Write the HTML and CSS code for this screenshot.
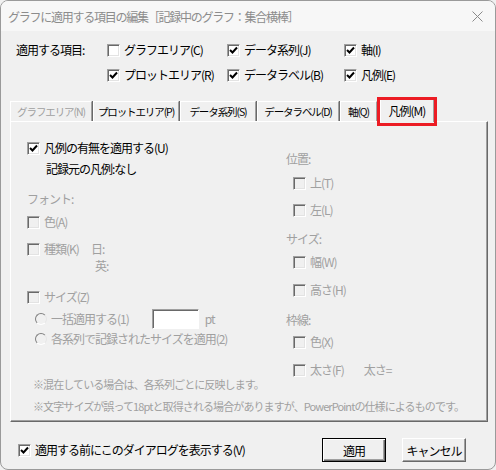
FILE: index.html
```html
<!DOCTYPE html>
<html lang="ja">
<head>
<meta charset="utf-8">
<link rel="stylesheet" href="styles.css">
</head>
<body>
<div class="window">
  <div class="titlebar">
    <span class="title">グラフに適用する項目の編集［記録中のグラフ：集合横棒］</span>
    <svg class="close" width="11" height="11" viewBox="0 0 11 11"><path d="M0.5 0.5L10.5 10.5M10.5 0.5L0.5 10.5" stroke="#8a8a8a" stroke-width="1" fill="none"/></svg>
  </div>
  <div class="body">
    <div class="targets">
      <div class="tlabel">適用する項目:</div>
      <div class="titems">
        <label class="cb"><span class="box"></span>グラフエリア(C)</label>
        <label class="cb"><span class="box on"><svg width="11" height="11" viewBox="0 0 11 11"><path d="M2 5L4.5 7.5L9 2.5" stroke="#000" stroke-width="2" fill="none"/></svg></span>データ系列(J)</label>
        <label class="cb"><span class="box on"><svg width="11" height="11" viewBox="0 0 11 11"><path d="M2 5L4.5 7.5L9 2.5" stroke="#000" stroke-width="2" fill="none"/></svg></span>軸(I)</label>
        <label class="cb"><span class="box on"><svg width="11" height="11" viewBox="0 0 11 11"><path d="M2 5L4.5 7.5L9 2.5" stroke="#000" stroke-width="2" fill="none"/></svg></span>プロットエリア(R)</label>
        <label class="cb"><span class="box on"><svg width="11" height="11" viewBox="0 0 11 11"><path d="M2 5L4.5 7.5L9 2.5" stroke="#000" stroke-width="2" fill="none"/></svg></span>データラベル(B)</label>
        <label class="cb"><span class="box on"><svg width="11" height="11" viewBox="0 0 11 11"><path d="M2 5L4.5 7.5L9 2.5" stroke="#000" stroke-width="2" fill="none"/></svg></span>凡例(E)</label>
      </div>
    </div>

    <div class="tabs">
      <div class="tab disabled t1">グラフエリア(N)</div>
      <div class="tab t2">プロットエリア(P)</div>
      <div class="tab t3">データ系列(S)</div>
      <div class="tab t4">データラベル(D)</div>
      <div class="tab t5">軸(Q)</div>
      <div class="tab active t6">凡例(M)<span class="highlight"></span></div>
    </div>

    <div class="panel">
      <div class="cols">
        <div class="colL">
          <label class="cb row r-u"><span class="box on"><svg width="11" height="11" viewBox="0 0 11 11"><path d="M2 5L4.5 7.5L9 2.5" stroke="#000" stroke-width="2" fill="none"/></svg></span>凡例の有無を適用する(U)</label>
          <div class="row r-src">記録元の凡例:なし</div>
          <div class="row gray r-font">フォント:</div>
          <label class="cb row gray r-color"><span class="box dis"></span>色(A)</label>
          <div class="row gray r-kind"><label class="cb"><span class="box dis"></span>種類(K)</label><span class="lang">日:</span></div>
          <div class="row gray r-en"><span class="lang">英:</span></div>
          <label class="cb row gray r-size"><span class="box dis"></span>サイズ(Z)</label>
          <div class="row gray r-rad1"><span class="radio"></span>一括適用する(1)<span class="input"></span><span class="pt">pt</span></div>
          <div class="row gray r-rad2"><span class="radio"></span>各系列で記録されたサイズを適用(2)</div>
        </div>
        <div class="colR">
          <div class="row gray r-pos">位置:</div>
          <label class="cb row gray sub r-top"><span class="box dis"></span>上(T)</label>
          <label class="cb row gray sub r-left"><span class="box dis"></span>左(L)</label>
          <div class="row gray r-sz">サイズ:</div>
          <label class="cb row gray sub r-w"><span class="box dis"></span>幅(W)</label>
          <label class="cb row gray sub r-h"><span class="box dis"></span>高さ(H)</label>
          <div class="row gray r-border">枠線:</div>
          <label class="cb row gray sub r-bc"><span class="box dis"></span>色(X)</label>
          <div class="row gray sub r-bw"><label class="cb"><span class="box dis"></span>太さ(F)</label><span class="weq">太さ=</span></div>
        </div>
      </div>
      <div class="notes gray">
        <div class="note">※混在している場合は、各系列ごとに反映します。</div>
        <div class="note n2">※文字サイズが誤って18ptと取得される場合がありますが、PowerPointの仕様によるものです。</div>
      </div>
    </div>

    <div class="footer">
      <label class="cb"><span class="box on"><svg width="11" height="11" viewBox="0 0 11 11"><path d="M2 5L4.5 7.5L9 2.5" stroke="#000" stroke-width="2" fill="none"/></svg></span>適用する前にこのダイアログを表示する(V)</label>
      <div class="buttons">
        <button class="btn default">適用</button>
        <button class="btn">キャンセル</button>
      </div>
    </div>
  </div>
</div>
</body>
</html>
```

FILE: styles.css
```css
* { box-sizing: border-box; }
html, body { margin: 0; padding: 0; background: #f0f0f0; }
body {
  font-family: "Noto Sans CJK JP", "Noto Sans", sans-serif;
  font-size: 12px;
  letter-spacing: -1px;
  color: #000;
}
.window {
  width: 496px;
  height: 470px;
  border: 1px solid #9a9a9a;
  border-radius: 8px;
  background: #f0f0f0;
  overflow: hidden;
  position: relative;
}
.titlebar {
  height: 30px;
  background: #f7f7f7;
  display: flex;
  align-items: center;
  justify-content: space-between;
  padding: 0 12px 0 7px;
}
.title {
  color: #8c8c8c;
  font-size: 12px;
  letter-spacing: -1.25px;
}
.close { display: block; }
.body { position: relative; }

.targets {
  display: flex;
  align-items: flex-start;
  padding: 11px 0 0 15px;
  height: 68px;
}
.tlabel { width: 91px; line-height: 16px; }
.titems {
  display: grid;
  grid-template-columns: 120px 117px 100px;
  grid-auto-rows: 16px;
  align-content: start;
  row-gap: 9px;
}
.cb {
  display: flex;
  align-items: center;
  gap: 4px;
  line-height: 16px;
  height: 16px;
  white-space: nowrap;
}
.box {
  width: 13px;
  height: 13px;
  flex: none;
  background: #fff;
  border: 1px solid;
  border-color: #a0a0a0 #ffffff #ffffff #a0a0a0;
  box-shadow: inset 1px 1px 0 #696969, inset -1px -1px 0 #e3e3e3;
  display: flex;
  align-items: center;
  justify-content: center;
}
.box svg { display: block; }
.box.dis { background: #f0f0f0; }

.tabs {
  display: flex;
  align-items: flex-end;
  height: 22px;
  padding-left: 9px;
  position: relative;
  z-index: 1;
  font-size: 10.5px;
  letter-spacing: -1.1px;
}
.tab {
  flex: none;
  height: 20px;
  line-height: 19px;
  padding: 0;
  text-align: center;
  border-top: 1px solid #fff;
  border-left: 1px solid #fff;
  border-right: 1px solid #a0a0a0;
  box-shadow: 1px 0 0 #696969;
  margin-right: 1px;
  white-space: nowrap;
}
.t1 { width: 82px; }
.t2 { width: 86px; }
.t3 { width: 76px; }
.t4 { width: 82px; }
.t5 { width: 37px; }
.tab.disabled { color: #a0a0a0; }
.tab.active {
  width: 54px;
  height: 23px;
  margin-bottom: -1px;
  background: #f0f0f0;
  margin-left: 2px;
  position: relative;
  line-height: 21px;
  font-size: 12px;
  letter-spacing: -1px;
}
.highlight {
  position: absolute;
  left: -4px;
  top: -3px;
  width: 60px;
  height: 29px;
  border: 3px solid #ec1c24;
}

.panel {
  margin: 0 7px 0 9px;
  height: 301px;
  border: 1px solid;
  border-color: #fff #696969 #696969 #fff;
  box-shadow: inset -1px -1px 0 #a0a0a0;
}
.cols { display: flex; height: 254px; }
.colL { width: 275px; padding-left: 16px; display: flex; flex-direction: column; }
.colR { display: flex; flex-direction: column; }
.row { height: 16px; line-height: 16px; display: flex; align-items: center; white-space: nowrap; }
.gray { color: #a0a0a0; }

.r-u { margin-top: 18px; }
.r-src { margin-top: 5px; padding-left: 19px; }
.r-font { margin-top: 14px; }
.r-color { margin-top: 7px; }
.r-kind { margin-top: 11px; }
.r-en { margin-top: 1px; }
.lang { margin-left: 12px; }
.r-en .lang { margin-left: 68px; }
.r-size { margin-top: 15px; }
.r-rad1 { margin-top: 6px; padding-left: 8px; }
.r-rad2 { margin-top: 4px; padding-left: 8px; }
.radio {
  width: 12px; height: 12px;
  border-radius: 50%;
  border: 1px solid;
  border-color: #808080 #e6e6e6 #ffffff #808080;
  background: #f0f0f0;
  margin-right: 4px;
  flex: none;
}
.input {
  width: 47px; height: 20px;
  background: #fff;
  border: 1px solid;
  border-color: #a0a0a0 #fff #fff #a0a0a0;
  box-shadow: inset 1px 1px 0 #696969;
  margin-left: 23px;
  flex: none;
}
.pt { margin-left: 6px; }

.colR .sub { padding-left: 7px; }
.r-pos { margin-top: 29px; }
.r-top { margin-top: 8px; }
.r-left { margin-top: 11px; }
.r-sz { margin-top: 13px; }
.r-w { margin-top: 7px; }
.r-h { margin-top: 12px; }
.r-border { margin-top: 14px; }
.r-bc { margin-top: 6px; }
.r-bw { margin-top: 12px; }
.weq { margin-left: 20px; }

.notes { padding-left: 22px; }
.note { height: 16px; line-height: 16px; white-space: nowrap; font-size: 11px; letter-spacing: -0.9px; }
.n2 { margin-top: 6px; }

.footer {
  display: flex;
  align-items: center;
  justify-content: space-between;
  padding: 16px 29px 0 17px;
}
.buttons { display: flex; gap: 16px; }
.btn {
  width: 64px; height: 24px;
  font: inherit;
  letter-spacing: -1px;
  color: #000;
  background: #f0f0f0;
  border: 1px solid;
  border-color: #fff #696969 #696969 #fff;
  box-shadow: inset -1px -1px 0 #a0a0a0;
  padding: 0;
}
.btn.default {
  border: 1px solid #000;
  box-shadow: inset 1px 1px 0 #fff, inset -1px -1px 0 #696969, inset -2px -2px 0 #a0a0a0;
}
```
